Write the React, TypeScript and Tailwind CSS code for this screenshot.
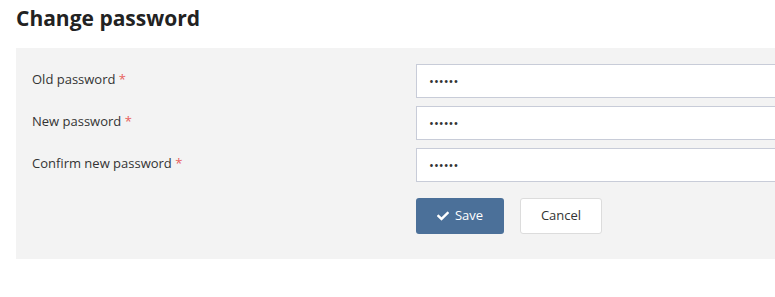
import React from 'react';
import { FaCheck } from 'react-icons/fa';

const fields = [
  { id: 'old', label: 'Old password' },
  { id: 'new', label: 'New password' },
  { id: 'confirm', label: 'Confirm new password' },
];

const App = () => {
  return (
    <div
      className="w-[775px] h-[297px] overflow-hidden bg-white text-[#333]"
      style={{ fontFamily: '"Open Sans", sans-serif' }}
    >
      <div className="w-[1000px] pl-4">
        <h1 className="text-[21px] leading-[30px] font-bold text-[#222] pt-[3px] mb-[15px]">Change password</h1>

        {/* Form panel */}
        <div className="bg-[#f3f3f3] px-4 pt-4 pb-[25px]">
          <div className="flex flex-col gap-2">
            {fields.map(field => (
              <div key={field.id} className="flex items-start">
                <label htmlFor={field.id} className="w-[384px] text-[13px] leading-[18px] pt-[6px]">
                  {field.label} <span className="text-[#e8605c]">*</span>
                </label>
                <input
                  id={field.id}
                  type="password"
                  defaultValue="123456"
                  className="w-[560px] h-[34px] bg-white border border-[#c8ccd8] px-3 text-[13px] text-[#333] outline-none"
                />
              </div>
            ))}
          </div>

          <div className="flex gap-4 mt-4 ml-[384px]">
            <button className="flex items-center justify-center gap-[6px] w-[88px] h-[36px] rounded-[3px] bg-[#4b7099] text-white text-[13px]">
              <FaCheck className="w-[12px] h-[12px]" />
              Save
            </button>
            <button className="w-[82px] h-[36px] rounded-[3px] bg-white border border-[#dcdcdc] text-[13px] text-[#333]">
              Cancel
            </button>
          </div>
        </div>
      </div>
    </div>
  );
};

export default App;
